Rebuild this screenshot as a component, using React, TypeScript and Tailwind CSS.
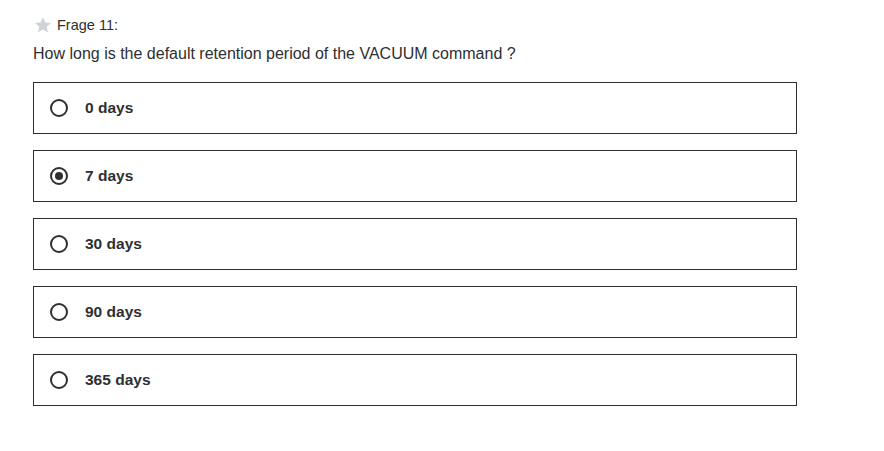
import React from 'react';

const options = ['0 days', '7 days', '30 days', '90 days', '365 days'];

function Radio({ checked }: { checked: boolean }) {
  return (
    <span className="flex h-[18px] w-[18px] shrink-0 items-center justify-center rounded-full border-2 border-[#2d2f31]">
      {checked && <span className="h-[8px] w-[8px] rounded-full bg-[#2d2f31]" />}
    </span>
  );
}

function Option({ label, checked }: { label: string; checked: boolean }) {
  return (
    <label className="flex h-[52px] w-[764px] items-center gap-[17px] border border-[#2d2f31] pl-[16px]">
      <Radio checked={checked} />
      <span className="text-[15.5px] font-bold text-[#2d2f31]">{label}</span>
    </label>
  );
}

export default function App() {
  return (
    <div className="min-h-[451px] w-[884px] bg-white px-[33px] pt-[15px] font-['Liberation_Sans',Arial,sans-serif] text-[#2d2f31]">
      <div className="flex h-[20px] items-center gap-[5px] pl-[1px]">
        <svg width="18" height="18" viewBox="0 0 24 24" className="fill-[#cfd3d7]">
          <path d="M12 1.5l3.1 7.1 7.7.7-5.8 5.1 1.7 7.6L12 18l-6.7 4 1.7-7.6-5.8-5.1 7.7-.7z" />
        </svg>
        <span className="pt-[2px] text-[14.5px]">Frage 11:</span>
      </div>
      <p className="mt-[9px] text-[16px] leading-[20px]">How long is the default retention period of the VACUUM command ?</p>
      <div className="mt-[18px] flex flex-col gap-[16px]">
        {options.map((o) => (
          <Option key={o} label={o} checked={o === '7 days'} />
        ))}
      </div>
    </div>
  );
}
